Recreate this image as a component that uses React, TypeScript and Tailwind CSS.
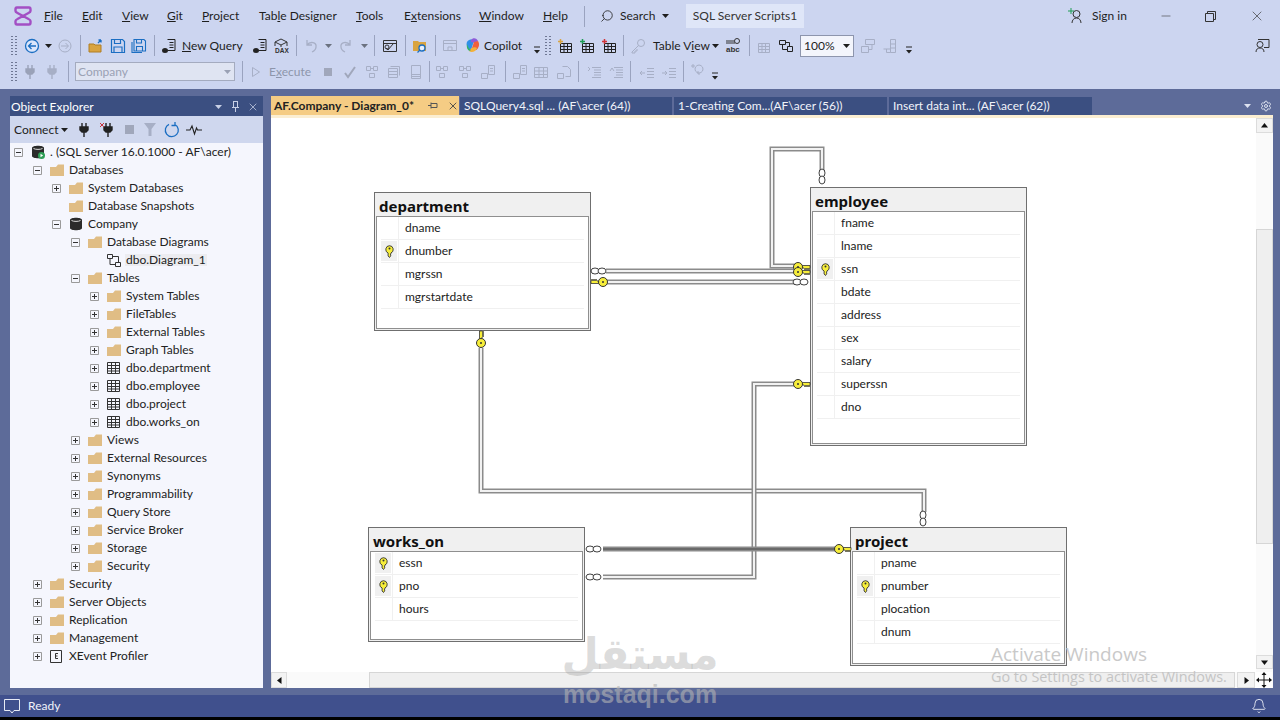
import { ReactNode } from "react";
import { Bell, Minus, Search, Settings, X } from "lucide-react";

// small helpers for the toolbars: every item sits in a fixed-width slot
function S({ w, children, className = "" }: { w: string; children?: ReactNode; className?: string }) {
  return <div className={`flex h-full shrink-0 items-center justify-center ${w} ${className}`}>{children}</div>;
}
const Sep = () => <div className="h-[21px] w-px bg-[#9aa3bf]" />;
const Caret = ({ c = "#1e1e1e" }: { c?: string }) => (
  <svg width="7" height="4" viewBox="0 0 7 4"><path d="M0 0h7L3.5 4z" fill={c} /></svg>
);
const Overflow = () => (
  <svg width="8" height="8" viewBox="0 0 8 8" className="mt-[9px]"><path d="M1 1h6" stroke="#222" /><path d="M1 4h6L4 7.5z" fill="#222" /></svg>
);
const Grip = () => (
  <div className="grid h-[20px] w-[6px] shrink-0 grid-cols-2 gap-[1px]">
    {Array.from({ length: 14 }).map((_, i) => <div key={i} className="h-[1.5px] w-[2px] bg-[#6f7894]" />)}
  </div>
);

const G = "#a7afc6";
function Ico({ children, w = 16, h = 16 }: { children: ReactNode; w?: number; h?: number }) {
  return <svg width={w} height={h} viewBox={`0 0 ${w} ${h}`} fill="none">{children}</svg>;
}
const GridIco = ({ c = "#222", badge }: { c?: string; badge?: string }) => (
  <Ico>
    <path d="M3.5 5.5h11v9h-11zM3.5 8.5h11M3.5 11.5h11M7 5.5v9M10.5 5.5v9" stroke={c} />
    {badge && <path d="M1 3.5h5M3.5 1v5" stroke={badge} strokeWidth="1.5" />}
  </Ico>
);
const DiagramIco = ({ c = "#222" }: { c?: string }) => (
  <Ico>
    <path d="M1.5 2.5h6v4h-6zM9.5 8.5h5v5h-5zM4.5 6.5v5h5M7.5 4.5h4v4" stroke={c} />
  </Ico>
);
const GrayIco = ({ kind }: { kind: number }) => (
  <Ico>
    {kind === 0 && <path d="M2.5 2.5h4v4h-4zM9.5 2.5h4v4h-4zM5.5 9.5h5v4h-5zM6.5 4.5h3" stroke={G} />}
    {kind === 1 && <path d="M2.5 4.5h9v9h-9zM4.5 2.5h9v9M2.5 7.5h9M2.5 10.5h9" stroke={G} />}
    {kind === 2 && <path d="M3.5 1.5h9v13h-9zM3.5 10.5h9M3.5 12.5h9" stroke={G} />}
    {kind === 3 && <path d="M1.5 9.5h6v5h-6zM8.5 1.5h6v9h-6zM10 4.5h3M10 7h3" stroke={G} />}
    {kind === 4 && <path d="M1.5 3.5h13v10h-13zM1.5 7h13M1.5 10.5h13M6 3.5v10M10.5 3.5v10" stroke={G} />}
    {kind === 5 && <path d="M1.5 9.5h6v5h-6zM6.5 2.5h5l3 3v7h-5" stroke={G} />}
    {kind === 6 && <path d="M5 3.5h9M7 6h7M7 8.5h7M7 11h7M5 13.5h9M1 3l2 2-2 2" stroke={G} />}
    {kind === 7 && <path d="M5 3.5h9M7 6h7M7 8.5h7M7 11h7M5 13.5h9M1 7l2-3 2 3" stroke={G} />}
    {kind === 8 && <path d="M8 4.5h7M8 7.5h7M8 10.5h7M8 13.5h7M6 9H1M3 7 1 9l2 2" stroke={G} />}
    {kind === 9 && <path d="M8 4.5h7M8 7.5h7M8 10.5h7M8 13.5h7M1 9h5M4 7l2 2-2 2" stroke={G} />}
    {kind === 10 && <path d="M5 5a4 4 0 1 1 0 .1M8 7v3h2M1 2h4M3 0v4" stroke={G} />}
    {kind === 11 && <path d="M1.5 8.5h7v6h-7zM5.5 1.5h9v5h-9zM12 6.5v5H8.5" stroke={G} />}
    {kind === 12 && <path d="M8.5 1.5h5v13h-5zM8.5 6h5M8.5 10h5M1.5 11h7M4.5 11v3.5h4" stroke={G} />}
  </Ico>
);
const Plug = ({ c = "#9aa2b8", x }: { c?: string; x?: boolean }) => (
  <Ico>
    <path d="M6 1v4M10 1v4M4 5h8v3l-2 2H6L4 8zM8 10v5" stroke={c} strokeWidth="1.4" fill={c} />
    {x && <path d="M0 1l4 4M4 1L0 5" stroke="#c8323a" strokeWidth="1" />}
  </Ico>
);
const QueryIco = () => (
  <Ico>
    <path d="M6.5 1.5h7.5v11H7M8.5 4.5h4M8.5 7h4M8.5 9.5h4" stroke="#222" />
    <ellipse cx="4" cy="12.5" rx="3" ry="2.5" fill="#222" />
  </Ico>
);

function Toolbar2() {
  return (
    <div className="flex h-[29px] items-center pl-[11px]">
      <Grip />
      <S w="w-[18px]" className="ml-[6px]">
        <Ico>
          <circle cx="8" cy="8" r="6.5" stroke="#1b6ec2" strokeWidth="1.3" fill="#dbe6fb" />
          <path d="M12 8H5M7.5 5 4.5 8l3 3" stroke="#1b6ec2" strokeWidth="1.3" />
        </Ico>
      </S>
      <S w="w-[14px]"><Caret /></S>
      <S w="w-[20px]">
        <Ico>
          <circle cx="8" cy="8" r="6" stroke={G} />
          <path d="M4 8h7M8.5 5l3 3-3 3" stroke={G} />
        </Ico>
      </S>
      <S w="w-[10px]"><Sep /></S>
      <S w="w-[22px]">
        <Ico>
          <path d="M1 6h5l1 1h6v7H1z" fill="#d9a441" stroke="#b07f24" />
          <path d="M10 5l3-3m0 0h-2.500m2.500 0v2.500" stroke="#1b6ec2" strokeWidth="1.3" />
        </Ico>
      </S>
      <S w="w-[22px]">
        <Ico><path d="M1.500 1.500h11l2 2v11h-13zM4.500 1.500v4h6v-4M4 14.500v-5.500h8v5.500" stroke="#1b6ec2" strokeWidth="1.200" /></Ico>
      </S>
      <S w="w-[20px]">
        <Ico><path d="M3 1.500h10l1.500 1.500v10h-11.500zM5.500 1.500v3.500h5v-3.500M5.500 13v-4.500h6v4.500M1 4v10.500h10" stroke="#1b6ec2" strokeWidth="1.100" /></Ico>
      </S>
      <S w="w-[10px]"><Sep /></S>
      <S w="w-[20px]"><QueryIco /></S>
      <div className="ml-[3px] w-[60px] shrink-0 whitespace-nowrap"><span className="underline">N</span>ew Query</div>
      <S w="w-[20px]" className="ml-[8px]"><QueryIco /></S>
      <S w="w-[22px]">
        <Ico>
          <path d="M8 1 14 4 8 7 2 4zM2 4v4M14 4v4M8 7v2" stroke="#333" />
          <text x="2" y="15" fontSize="6.500" fontWeight="700" fill="#333" fontFamily="Liberation Sans">DAX</text>
        </Ico>
      </S>
      <S w="w-[8px]"><Sep /></S>
      <S w="w-[22px]">
        <Ico><path d="M4 2v5h5M4 7c3-4 10-3 9 2 0 3-2 4-4 5" stroke={G} strokeWidth="1.300" /></Ico>
      </S>
      <S w="w-[12px]"><Caret c="#6b7280" /></S>
      <S w="w-[24px]">
        <Ico><path d="M12 2v5H7M12 7C9 3 2 4 3 9c0 3 2 4 4 5" stroke={G} strokeWidth="1.300" /></Ico>
      </S>
      <S w="w-[12px]"><Caret c="#6b7280" /></S>
      <S w="w-[8px]"><Sep /></S>
      <S w="w-[24px]">
        <Ico><path d="M1.500 2.500h13v11h-13zM1.500 5.500h13M4 10l2 2 5-6" stroke="#333" /><circle cx="5" cy="9" r="2" stroke="#333" /></Ico>
      </S>
      <S w="w-[6px]"><Sep /></S>
      <S w="w-[24px]">
        <Ico>
          <path d="M1 3h5l1 1h7v9H1z" fill="#d9a441" />
          <circle cx="10" cy="10" r="3" stroke="#1b6ec2" strokeWidth="1.300" fill="#e7effc" />
          <path d="M8 12l-2.500 2.500" stroke="#1b6ec2" strokeWidth="1.300" />
        </Ico>
      </S>
      <S w="w-[6px]"><Sep /></S>
      <S w="w-[24px]">
        <Ico><path d="M1.500 2.500h13v10h-13zM1.500 5.500h13M6 9h4v3.500H6z" stroke={G} /></Ico>
      </S>
      <S w="w-[20px]">
        <Ico w={17} h={17}>
          <path d="M3 9c-2-6 5-8 7-5l-3 9c-1 2-3 0-4-4z" fill="#2f8fe8" />
          <path d="M7 3c2-3 6-2 7 1l-3 2-4-1z" fill="#8e5bd8" />
          <path d="M10 5l4-1c2 3 1 7-2 9l-5 1z" fill="#f0603c" />
          <path d="M5 14c1-3 6-5 8-3-1 4-6 5-8 3z" fill="#f3b13b" />
          <path d="M3 7c1 3 2 5 4 6-2 2-5-1-4-6z" fill="#35b46a" />
        </Ico>
      </S>
      <div className="ml-[2px] w-[40px] shrink-0 whitespace-nowrap">Copilot</div>
      <S w="w-[14px]" className="ml-[6px]"><Overflow /></S>
      <div className="ml-[1px]"><Grip /></div>
      <S w="w-[22px]" className="ml-[3px]"><GridIco badge="#d9a441" /></S>
      <S w="w-[22px]"><GridIco badge="#1f9d55" /></S>
      <S w="w-[22px]"><GridIco badge="#d13438" /></S>
      <S w="w-[6px]"><Sep /></S>
      <S w="w-[24px]">
        <Ico><circle cx="11" cy="5" r="3.500" stroke={G} /><path d="M8.500 7.500 2 14v1h3v-2h2v-2" stroke={G} /></Ico>
      </S>
      <div className="ml-[3px] w-[58px] shrink-0 whitespace-nowrap">Table V<span className="underline">i</span>ew</div>
      <S w="w-[8px]"><Caret /></S>
      <S w="w-[28px]">
        <Ico w={18} h={17}>
          <circle cx="13" cy="4" r="2.500" stroke="#333" />
          <path d="M2 4h8M2 6h9" stroke="#333" />
          <text x="2" y="15" fontSize="8" fontWeight="700" fill="#333" fontFamily="Liberation Sans">abc</text>
        </Ico>
      </S>
      <S w="w-[4px]"><Sep /></S>
      <S w="w-[24px]"><GridIco c={G} /></S>
      <S w="w-[22px]"><DiagramIco /></S>
      <div className="ml-[3px] flex h-[22px] w-[54px] shrink-0 items-center justify-between border border-[#8d95ad] bg-[#f3f5fc] pl-[3px] pr-[3px]">
        <span>100%</span>
        <Caret />
      </div>
      <S w="w-[22px]" className="ml-[3px]"><GrayIco kind={11} /></S>
      <S w="w-[22px]"><GrayIco kind={12} /></S>
      <S w="w-[14px]" className="ml-[1px]"><Overflow /></S>
      <div className="flex-1" />
      <S w="w-[20px]" className="mr-[8px]">
        <Ico w={18} h={18}>
          <path d="M5 2.500h11v8h-5M3 15c0-3 2-4 4-4s4 1 4 4" stroke="#333" />
          <circle cx="7" cy="7.500" r="3" stroke="#333" fill="#ccd5f0" />
        </Ico>
      </S>
    </div>
  );
}

function Toolbar3() {
  return (
    <div className="flex h-[23px] items-center pl-[11px] text-[#8d95ab]">
      <Grip />
      <S w="w-[22px]" className="ml-[2px]"><Plug /></S>
      <S w="w-[22px]"><Plug c="#a7afc6" /></S>
      <S w="w-[10px]"><Sep /></S>
      <div className="ml-[2px] flex h-[19px] w-[160px] shrink-0 items-center justify-between border border-[#a4abbf] bg-[#dfe4f2] pl-[2px] pr-[3px] text-[#9aa1b4]">
        <span>Company</span>
        <Caret c="#9aa1b4" />
      </div>
      <S w="w-[14px]"><Sep /></S>
      <S w="w-[14px]"><svg width="8" height="10" viewBox="0 0 8 10"><path d="M.5.500v9l7-4.500z" stroke="#a7afc6" fill="none" /></svg></S>
      <div className="ml-[6px] w-[40px] shrink-0 whitespace-nowrap">E<span className="underline">x</span>ecute</div>
      <S w="w-[22px]" className="ml-[8px]"><div className="h-[8px] w-[8px] bg-[#a0a7bb]" /></S>
      <S w="w-[22px]"><Ico><path d="M3 9l3 4 7-10" stroke="#a0a7bb" strokeWidth="2" /></Ico></S>
      <S w="w-[22px]"><GrayIco kind={0} /></S>
      <S w="w-[22px]"><GrayIco kind={1} /></S>
      <S w="w-[22px]"><GrayIco kind={2} /></S>
      <S w="w-[5px]"><Sep /></S>
      <S w="w-[20px]"><GrayIco kind={0} /></S>
      <S w="w-[26px]"><GrayIco kind={0} /></S>
      <S w="w-[20px]"><GrayIco kind={3} /></S>
      <S w="w-[14px]"><Sep /></S>
      <S w="w-[16px]"><GrayIco kind={3} /></S>
      <S w="w-[26px]"><GrayIco kind={4} /></S>
      <S w="w-[20px]"><GrayIco kind={5} /></S>
      <S w="w-[8px]"><Sep /></S>
      <S w="w-[26px]"><GrayIco kind={6} /></S>
      <S w="w-[18px]"><GrayIco kind={7} /></S>
      <S w="w-[8px]"><Sep /></S>
      <S w="w-[26px]"><GrayIco kind={8} /></S>
      <S w="w-[17px]"><GrayIco kind={9} /></S>
      <S w="w-[12px]"><Sep /></S>
      <S w="w-[18px]"><GrayIco kind={10} /></S>
      <S w="w-[14px]" className="ml-[1px]"><Overflow /></S>
    </div>
  );
}

function TitleBar() {
  const menu: [string, string, string, string][] = [
    ["w-[38px]", "", "F", "ile"],
    ["w-[40px]", "", "E", "dit"],
    ["w-[45px]", "", "V", "iew"],
    ["w-[35px]", "", "G", "it"],
    ["w-[57px]", "", "P", "roject"],
    ["w-[97px]", "Tab", "l", "e Designer"],
    ["w-[48px]", "", "T", "ools"],
    ["w-[75px]", "E", "x", "tensions"],
    ["w-[64px]", "", "W", "indow"],
    ["w-[41px]", "", "H", "elp"],
  ];
  return (
    <div className="flex h-[31px] items-center pl-[14px] pt-[1px]">
      <svg width="18" height="22" viewBox="0 0 18 22" fill="none" className="shrink-0">
        <path d="M3 2.500h12c1.500 0 1.500 1 1.500 2v1.500c0 1-1 1.500-2 2L3.500 14c-1 .5-2 1-2 2v1.500c0 1 0 2 1.500 2h12c1.500 0 1.500-1 1.500-2V16c0-1-1-1.500-2-2L3.500 8c-1-.5-2-1-2-2V4.500c0-1 0-2 1.500-2z" stroke="#a34fc4" strokeWidth="2.400" />
      </svg>
      <div className="ml-[12px] flex">
        {menu.map(([w, a, k, b]) => (
          <div key={k + b} className={`${w} shrink-0 whitespace-nowrap`}>
            {a}<span className="underline">{k}</span>{b}
          </div>
        ))}
      </div>
      <div className="h-[21px] w-px bg-[#9aa3bf]" />
      <Search size={14} strokeWidth={1.4} className="ml-[15px] -scale-x-100 text-[#222]" />
      <div className="ml-[6px] w-[36px]">Search</div>
      <div className="ml-[6px]"><Caret /></div>
      <div className="ml-[17px] flex h-[24px] w-[118px] items-center justify-center bg-[#dfe6f8] text-[#333]">SQL Server Scripts1</div>
      <div className="flex-1" />
      <Ico w={18} h={18}>
        <path d="M5 16c0-3 2-5 4.500-5s4.500 2 4.500 5" stroke="#333" />
        <circle cx="9.500" cy="7" r="3.500" stroke="#333" />
        <path d="M1 4h6M4 1v6" stroke="#1f9d55" />
      </Ico>
      <div className="ml-[7px] w-[37px] whitespace-nowrap">Sign in</div>
      <Minus size={14} strokeWidth={1} className="ml-[30px] text-[#333]" />
      <svg width="11" height="11" viewBox="0 0 11 11" className="ml-[32px]" fill="none"><path d="M.5 2.500h8v8h-8zM2.500 2.500v-2h8v8h-2" stroke="#333" /></svg>
      <X size={16} strokeWidth={1} className="ml-[33px] mr-[15px] text-[#333]" />
    </div>
  );
}

type Node = [number, "+" | "-" | "", "folder" | "server" | "db" | "diagram" | "table" | "xevent", string];
const tree: Node[] = [
  [0, "-", "server", ". (SQL Server 16.0.1000 - AF\\acer)"],
  [1, "-", "folder", "Databases"],
  [2, "+", "folder", "System Databases"],
  [2, "", "folder", "Database Snapshots"],
  [2, "-", "db", "Company"],
  [3, "-", "folder", "Database Diagrams"],
  [4, "", "diagram", "dbo.Diagram_1"],
  [3, "-", "folder", "Tables"],
  [4, "+", "folder", "System Tables"],
  [4, "+", "folder", "FileTables"],
  [4, "+", "folder", "External Tables"],
  [4, "+", "folder", "Graph Tables"],
  [4, "+", "table", "dbo.department"],
  [4, "+", "table", "dbo.employee"],
  [4, "+", "table", "dbo.project"],
  [4, "+", "table", "dbo.works_on"],
  [3, "+", "folder", "Views"],
  [3, "+", "folder", "External Resources"],
  [3, "+", "folder", "Synonyms"],
  [3, "+", "folder", "Programmability"],
  [3, "+", "folder", "Query Store"],
  [3, "+", "folder", "Service Broker"],
  [3, "+", "folder", "Storage"],
  [3, "+", "folder", "Security"],
  [1, "+", "folder", "Security"],
  [1, "+", "folder", "Server Objects"],
  [1, "+", "folder", "Replication"],
  [1, "+", "folder", "Management"],
  [1, "+", "xevent", "XEvent Profiler"],
];
const indent = ["pl-[4px]", "pl-[23px]", "pl-[42px]", "pl-[61px]", "pl-[80px]"];

function TreeIcon({ kind }: { kind: Node[2] }) {
  if (kind === "folder")
    return <svg width="14" height="12" viewBox="0 0 14 12"><path d="M0 3h6l2-2.500h6V12H0z" fill="#e0bd85" /></svg>;
  if (kind === "db" || kind === "server")
    return (
      <svg width="14" height="14" viewBox="0 0 14 14">
        <path d="M1 3c0-3 12-3 12 0v8c0 3-12 3-12 0z" fill="#2b2b2b" />
        <path d="M2.500 3.500c2 1.200 7 1.200 9 0" stroke="#ddd" fill="none" />
        {kind === "server" && <><circle cx="10.500" cy="10.500" r="3.500" fill="#2f9e57" /><path d="M9.500 8.800v3.400l2.600-1.700z" fill="#fff" /></>}
      </svg>
    );
  if (kind === "diagram")
    return <svg width="14" height="13" viewBox="0 0 14 13" fill="none"><path d="M.5.500h5v4h-5zM8.500 8.500h5v4h-5zM3 4.500v6h5.500M5.500 2.500h6v6" stroke="#333" /></svg>;
  if (kind === "table")
    return <svg width="13" height="12" viewBox="0 0 13 12" fill="none"><path d="M.5.500h12v11H.5zM.5 3.500h12M.5 6.500h12M.5 9h12M4.500.5v11M8.500.5v11" stroke="#333" /></svg>;
  return (
    <svg width="12" height="13" viewBox="0 0 12 13" fill="none"><path d="M.5.500h11v12H.5zM8 3.500H5.500v2.500H7.500M5.500 6v2.500H8" stroke="#333" /></svg>
  );
}

function ObjectExplorer() {
  return (
    <div className="flex w-[253px] shrink-0 flex-col bg-[#f5f6fd]">
      <div className="flex h-[20px] shrink-0 items-center bg-[#3b4f81] pl-[1px] pt-[1px] text-white">
        <span className="w-[204px]">Object Explorer</span>
        <Caret c="#c8d0e6" />
        <svg width="9" height="11" viewBox="0 0 9 11" fill="none" className="ml-[9px]"><path d="M2.500.5v6M6.500.5v6M1 6.500h7M4.500 6.500V11M2 .5h5" stroke="#c8d0e6" /></svg>
        <X size={12} strokeWidth={1.500} className="ml-[7px] text-[#c8d0e6]" />
      </div>
      <div className="flex h-[27px] shrink-0 items-center bg-[#cfd7ee] pl-[4px] text-[#222]">
        <span className="w-[47px]">Connect</span>
        <Caret />
        <S w="w-[24px]" className="ml-[4px]"><Plug c="#222" /></S>
        <S w="w-[24px]"><Plug c="#222" x /></S>
        <S w="w-[18px]"><div className="h-[9px] w-[9px] bg-[#a0a7bb]" /></S>
        <S w="w-[24px]"><svg width="12" height="13" viewBox="0 0 12 13"><path d="M0 0h12L7.500 6v7h-3V6z" fill="#a7afc6" /></svg></S>
        <S w="w-[20px]">
          <Ico><path d="M11 2.500A6.500 6.500 0 1 1 5 2.300M11 0v3.500H7.500" stroke="#1b6ec2" strokeWidth="1.300" /></Ico>
        </S>
        <S w="w-[24px]">
          <Ico><path d="M0 8h4l2-4 2.500 8 2-6 1 2h4.500" stroke="#222" strokeWidth="1.100" /></Ico>
        </S>
      </div>
      <div>
        {tree.map(([lv, exp, icon, label], i) => (
          <div key={i} className={`flex h-[18px] items-center whitespace-nowrap text-[#222] ${indent[lv]}`}>
            <div className="flex w-[17px] shrink-0">
              {exp && (
                <svg width="9" height="9" viewBox="0 0 9 9" fill="none">
                  <path d="M.5.5h8v8h-8z" stroke="#9a9a9a" />
                  <path d="M2 4.500h5" stroke="#333" />
                  {exp === "+" && <path d="M4.500 2v5" stroke="#333" />}
                </svg>
              )}
            </div>
            <div className="flex w-[19px] shrink-0"><TreeIcon kind={icon} /></div>
            <span className={icon === "diagram" ? "bg-[#ececf0] px-[1px] -ml-[1px]" : ""}>{label}</span>
          </div>
        ))}
      </div>
    </div>
  );
}

function TabItem({ w, label }: { w: string; label: string }) {
  return (
    <div className={`flex h-[18px] shrink-0 items-center whitespace-nowrap bg-[#3b4f81] pl-[4px] text-[#f1f3fa] ${w}`}>{label}</div>
  );
}

const SmallKey = () => (
  <svg width="9" height="13" viewBox="0 0 9 13">
    <path d="M4.500.7a3.800 3.800 0 0 1 1.400 7.300v1.200l-.9.6.9.7-1.400 2-1.400-1.500V8A3.800 3.800 0 0 1 4.500.7z" fill="#f7ee3a" stroke="#333" strokeWidth=".9" />
    <circle cx="4.500" cy="3.500" r="1" fill="#333" />
  </svg>
);

function DbTable({ title, rows, pos }: { title: string; rows: [string, boolean][]; pos: string }) {
  return (
    <div className={`absolute flex w-[217px] flex-col border border-[#6f6f6f] bg-[#f0f0f0] ${pos}`}>
      <div className="flex h-[23px] shrink-0 items-center pl-[4px] pt-[4px] font-['Noto_Sans',sans-serif] text-[15px] font-bold leading-none text-[#111]">{title}</div>
      <div className="mx-[1px] mb-[1px] flex-1 border border-[#8f8f8f] bg-white px-[4px]">
        {rows.map(([name, pk]) => (
          <div key={name} className="flex h-[23px] items-stretch border-b border-[#f0f0f0] text-[#222]">
            <div className={`my-[1px] flex w-[16px] shrink-0 items-center justify-center ${pk ? "bg-[#f0f0f0]" : ""}`}>{pk && <SmallKey />}</div>
            <div className="ml-[1px] border-l border-[#f0f0f0] pl-[6px] leading-[21px]">{name}</div>
          </div>
        ))}
      </div>
    </div>
  );
}

// connector: light edge, white core and dark edge
function Link({ d, heavy }: { d: string; heavy?: boolean }) {
  return (
    <g fill="none">
      <path d={d} stroke="#8b8b8b" strokeWidth="5" />
      <path d={d} stroke={heavy ? "#6a6a6a" : "#f2f2f2"} strokeWidth="2" />
    </g>
  );
}
function Inf({ x, y, v }: { x: number; y: number; v?: boolean }) {
  return (
    <g fill="#fff" stroke="#111" strokeWidth=".8">
      <ellipse cx={x} cy={y} rx={v ? 3 : 4} ry={v ? 4 : 3} />
      <ellipse cx={v ? x : x + 7} cy={v ? y + 7 : y} rx={v ? 3 : 4} ry={v ? 4 : 3} />
    </g>
  );
}
function Key({ x, y, dir }: { x: number; y: number; dir: "l" | "r" | "u" }) {
  const rot = dir === "r" ? 0 : dir === "l" ? 180 : -90;
  return (
    <g transform={`translate(${x} ${y}) rotate(${rot})`}>
      <path d="M3 -1.500h9v2l-1 2.500-1-2-1 2-1-2-1 2-1-2H3z" fill="#f7ee3a" stroke="#333" strokeWidth=".8" />
      <circle r="4.500" fill="#f7ee3a" stroke="#333" strokeWidth="1" />
      <circle r="1" fill="#333" />
    </g>
  );
}

function Diagram() {
  return (
    <div className="relative flex-1 overflow-hidden bg-white">
      <DbTable title="department" pos="left-[103px] top-[74px] h-[139px]" rows={[["dname", false], ["dnumber", true], ["mgrssn", false], ["mgrstartdate", false]]} />
      <DbTable title="employee" pos="left-[539px] top-[69px] h-[259px]" rows={[["fname", false], ["lname", false], ["ssn", true], ["bdate", false], ["address", false], ["sex", false], ["salary", false], ["superssn", false], ["dno", false]]} />
      <DbTable title="works_on" pos="left-[97px] top-[409px] h-[115px]" rows={[["essn", true], ["pno", true], ["hours", false]]} />
      <DbTable title="project" pos="left-[579px] top-[409px] h-[139px]" rows={[["pname", false], ["pnumber", true], ["plocation", false], ["dnum", false]]} />
      <svg className="absolute left-0 top-0 h-[554px] w-[985px]" viewBox="271 118 985 554">
        <Link d="M822 172V149H772V266H796" />
        <Link d="M606 271H796" />
        <Link d="M606 282H796" />
        <Link d="M481 348V491H924V512" />
        <Link d="M796 384H754V577H603" />
        <Link d="M603 549H835" heavy />
        <Inf x={822} y={173} v />
        <Inf x={595} y={271} />
        <Key x={603} y={282} dir="l" />
        <Key x={798} y={267} dir="r" />
        <Key x={798} y={272} dir="r" />
        <Inf x={797} y={282} />
        <Key x={481} y={343} dir="u" />
        <Key x={798} y={384} dir="r" />
        <Inf x={590} y={549} />
        <Inf x={590} y={577} />
        <Key x={839} y={549} dir="r" />
        <Inf x={923} y={515} v />
      </svg>
    </div>
  );
}

const ArrowBtn = ({ d, className }: { d: string; className: string }) => (
  <div className={`flex shrink-0 items-center justify-center border border-[#dcdcdc] bg-[#f3f3f3] ${className}`}>
    <svg width="9" height="9" viewBox="0 0 9 9"><path d={d} fill="#111" /></svg>
  </div>
);

function DocArea() {
  return (
    <div className="flex w-[1002px] shrink-0 flex-col">
      <div className="flex h-[19px] shrink-0 items-end">
        <div className="flex h-[19px] w-[188px] shrink-0 items-center whitespace-nowrap bg-[#f5cc84] pl-[3px] font-bold text-[#222]">
          <span className="w-[150px]">AF.Company - Diagram_0*</span>
          <svg width="10" height="9" viewBox="0 0 10 9" fill="none" className="ml-[4px]"><path d="M0 4.500h3M3 1.500v6M3 2.500h6v4H3" stroke="#555" /></svg>
          <X size={12} strokeWidth={1.800} className="ml-[9px] text-[#444]" />
        </div>
        <div className="ml-[1px]"><TabItem w="w-[212px]" label="SQLQuery4.sql ... (AF\acer (64))" /></div>
        <div className="ml-[2px]"><TabItem w="w-[213px]" label="1-Creating Com...(AF\acer (56))" /></div>
        <div className="ml-[2px]"><TabItem w="w-[203px]" label="Insert data int... (AF\acer (62))" /></div>
        <div className="flex h-[19px] flex-1 items-center justify-end text-[#dde2f0]">
          <Caret c="#dde2f0" />
          <Settings size={12} strokeWidth={2} className="ml-[9px] mr-[1px]" />
        </div>
      </div>
      <div className="h-[3px] shrink-0 bg-[#fbeed2]" />
      <div className="flex min-h-0 flex-1">
        <Diagram />
        <div className="flex w-[17px] shrink-0 flex-col bg-[#fafafa]">
          <ArrowBtn d="M4.500 2 8 6.500H1z" className="h-[15px] w-[17px]" />
          <div className="h-[96px]" />
          <div className="h-[315px] border border-[#d6d6d6] bg-[#efefef]" />
          <div className="flex-1" />
          <ArrowBtn d="M4.500 7 8 2.500H1z" className="mb-[3px] h-[14px] w-[17px]" />
        </div>
      </div>
      <div className="flex h-[16px] shrink-0 bg-[#fafafa]">
        <ArrowBtn d="M2 4.500 6.500 1v7z" className="h-[16px] w-[16px]" />
        <div className="w-[82px]" />
        <div className="w-[866px] border border-[#d6d6d6] bg-[#efefef]" />
        <div className="w-[2px]" />
        <ArrowBtn d="M7 4.500 2.500 1v7z" className="h-[16px] w-[18px]" />
        <div className="flex h-[16px] w-[17px] items-center justify-center bg-white">
          <svg width="16" height="16" viewBox="0 0 16 16" fill="none">
            <path d="M8 1v14M1 8h14" stroke="#111" />
            <path d="M8 0l2.500 3h-5zM8 16l2.500-3h-5zM0 8l3-2.500v5zM16 8l-3-2.500v5z" fill="#111" />
          </svg>
        </div>
      </div>
    </div>
  );
}

export default function App() {
  return (
    <div className="relative flex h-[720px] w-[1280px] flex-col overflow-hidden bg-[#ccd5f0] font-['Lato',sans-serif] text-[12px] leading-none text-[#1e1e1e]">
      <TitleBar />
      <Toolbar2 />
      <Toolbar3 />
      <div className="h-[6px] shrink-0" />
      <div className="flex h-[606px] shrink-0 gap-[8px] bg-[#5d6b99] pl-[10px] pr-[7px] pb-[7px] pt-[7px]">
        <ObjectExplorer />
        <DocArea />
      </div>
      <div className="flex h-[22px] shrink-0 items-center bg-[#40508d] pl-[4px] text-[#f1f3fa]">
        <svg width="16" height="16" viewBox="0 0 16 16" fill="none"><path d="M.5 1.500h15v11h-5.500L8 15l-2-2.500H.5z" stroke="#e8ebf5" /></svg>
        <span className="ml-[8px]">Ready</span>
        <div className="flex-1" />
        <Bell size={16} strokeWidth={1.300} className="mr-[13px]" />
      </div>
      <div className="h-[3px] shrink-0 bg-black" />

      {/* what lies over the page: the activation notice and the site watermark */}
      <div className="pointer-events-none absolute left-[991px] top-[645px] whitespace-nowrap font-['Open_Sans',sans-serif] text-[19px] text-[#c9c9c9]">Activate Windows</div>
      <div className="pointer-events-none absolute left-[991px] top-[670px] whitespace-nowrap font-['Open_Sans',sans-serif] text-[14.400px] text-[#c4c4c4]">Go to Settings to activate Windows.</div>
      <div className="pointer-events-none absolute left-[563px] top-[637px] flex w-[154px] flex-col items-center font-bold">
        <div dir="rtl" className="whitespace-nowrap font-['DejaVu_Sans',sans-serif] text-[43px] leading-[34px] text-[#9a9a9a]/35">مستقل</div>
        <div className="mt-[11px] font-['Liberation_Sans',sans-serif] text-[25px] leading-[24px] text-[#b4b4b4]/60">mostaqi.com</div>
      </div>
    </div>
  );
}
